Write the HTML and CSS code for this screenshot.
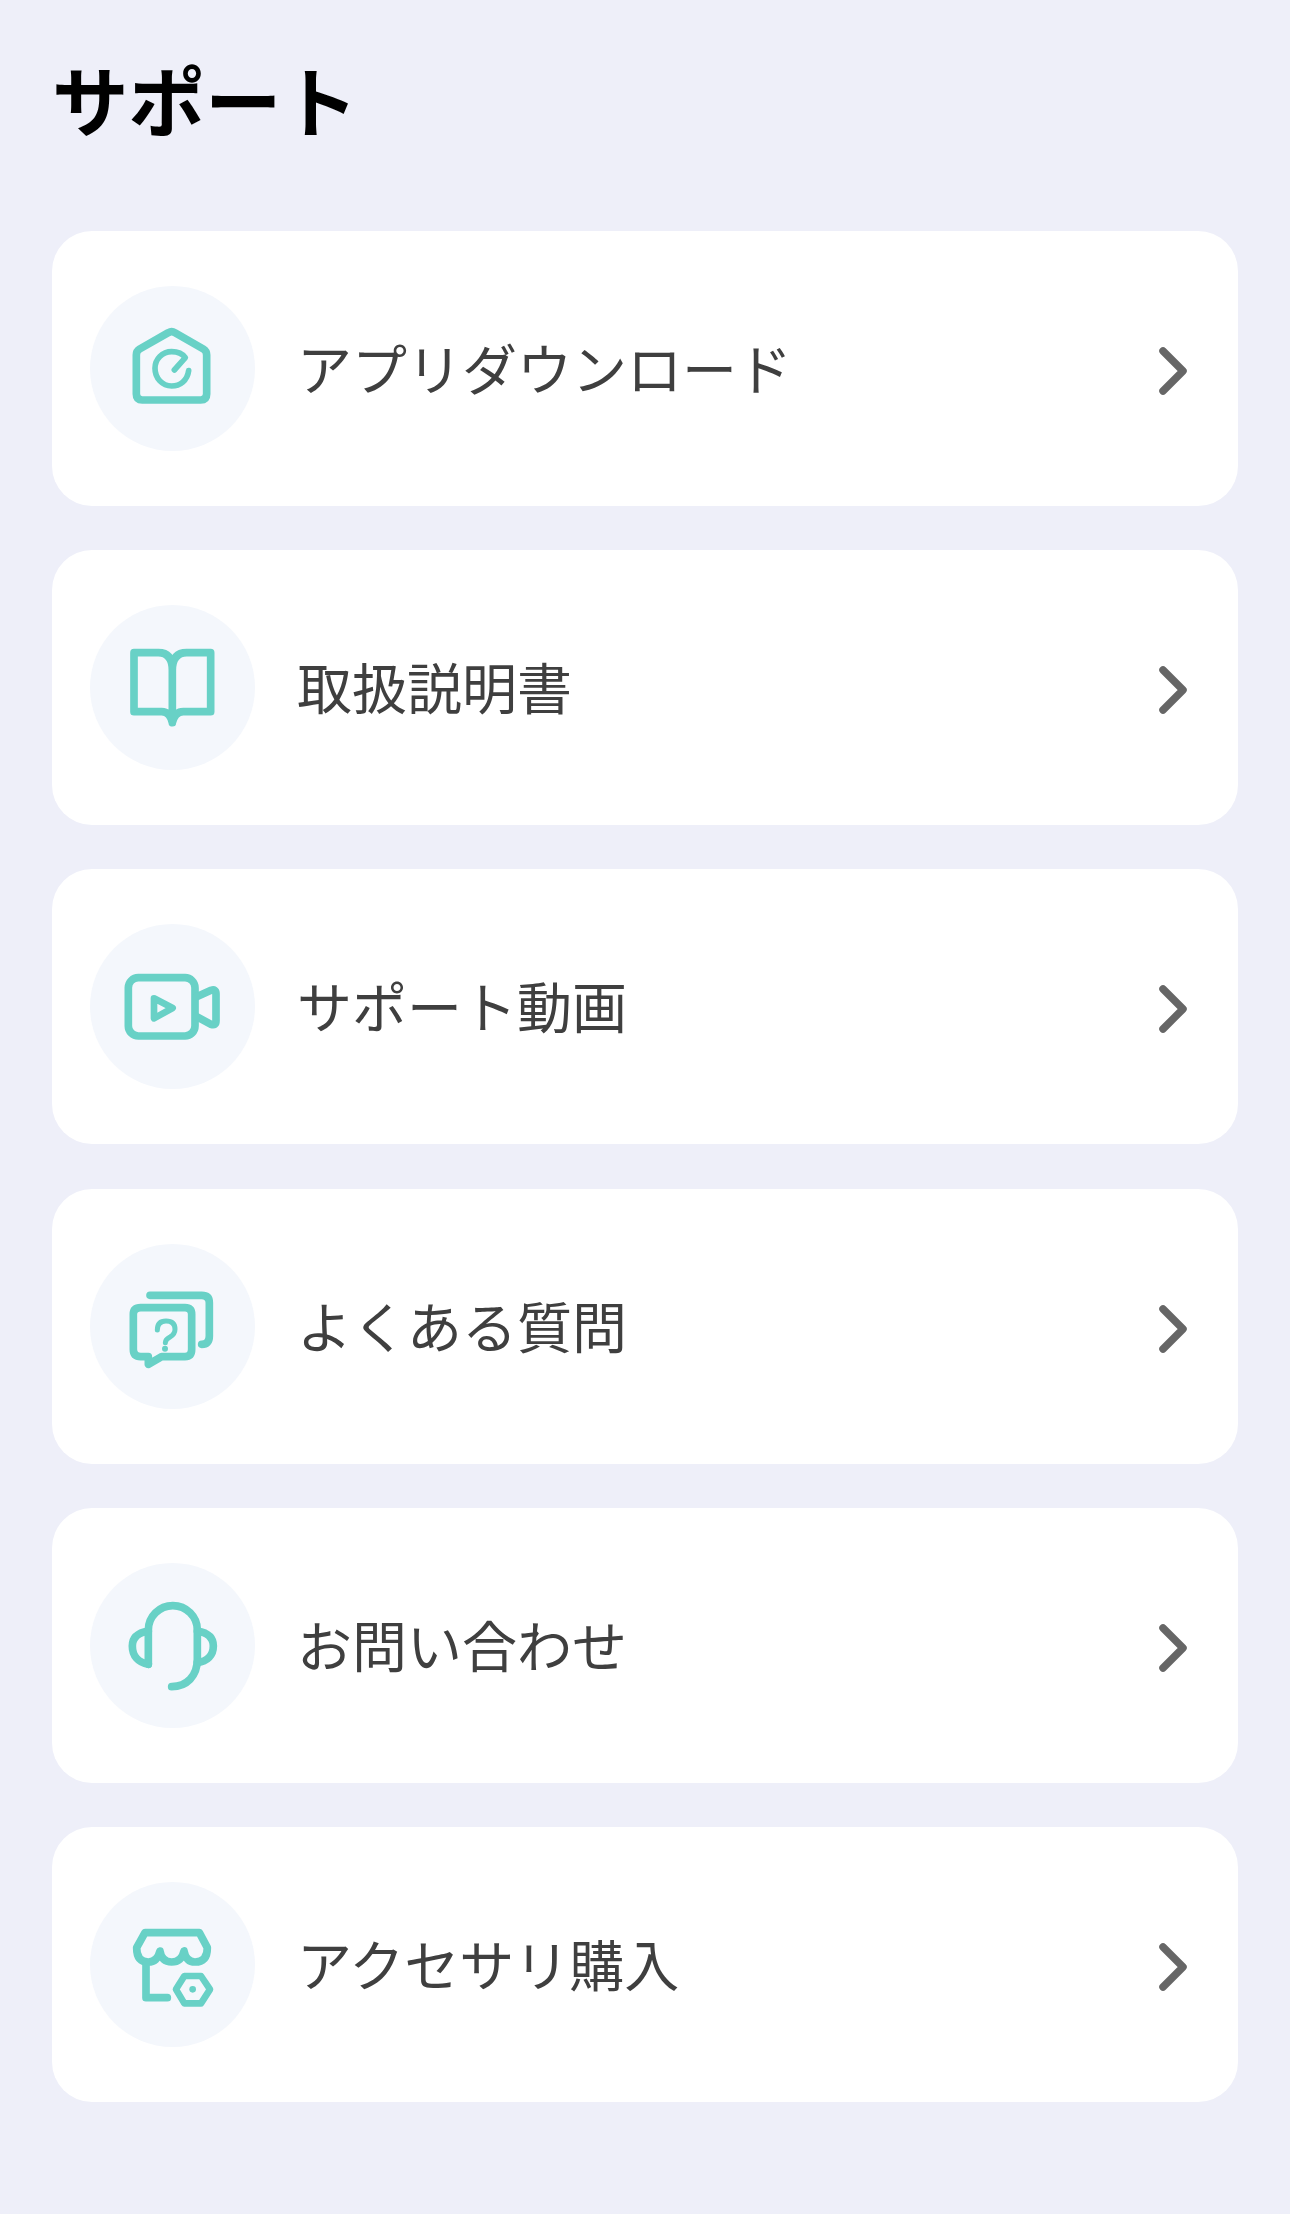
FILE: index.html
```html
<!DOCTYPE html>
<html lang="ja">
<head>
<meta charset="utf-8">
<title>サポート</title>
<link rel="stylesheet" href="styles.css">
</head>
<body>
<main class="page">
  <h1 class="title">サポート</h1>
  <ul class="list">
    <li class="card">
      <div class="badge">
        <svg class="icon" viewBox="30 18 495 495"><path class="s23" d="M265 158 Q275 152 285 158 L370 207 Q380 213 380 225 V342 Q380 360 362 360 H187 Q169 360 169 342 V225 Q169 213 179 207 Z"/><path class="s17" d="M326 272 C322 302 300 318 275 318 C247 318 225 295 225 265 C225 237 247 215 275 215 C293 215 308 222 316 233 L283 270"/></svg>
      </div>
      <span class="label">アプリダウンロード</span>
      <svg class="chevron" viewBox="0 0 30 50"><path d="M5 5 L25 25 L5 45"/></svg>
    </li>
    <li class="card">
      <div class="badge">
        <svg class="icon" viewBox="30 15 495 495"><path class="s23" d="M277 210 Q277 158 235 158 H162 V335 H245 Q270 335 277 368 Q285 335 310 335 H392 V158 H320 Q277 158 277 210 V368"/></svg>
      </div>
      <span class="label">取扱説明書</span>
      <svg class="chevron" viewBox="0 0 30 50"><path d="M5 5 L25 25 L5 45"/></svg>
    </li>
    <li class="card">
      <div class="badge">
        <svg class="icon" viewBox="30 27 495 495"><rect class="s23" x="145" y="188" width="200" height="175" rx="30"/><path class="s23" d="M350 245 L393 226 Q408 221 408 236 V318 Q408 333 393 328 L350 305"/><path class="s20" d="M222 250 L278 279 L222 310 Z"/></svg>
      </div>
      <span class="label">サポート動画</span>
      <svg class="chevron" viewBox="0 0 30 50"><path d="M5 5 L25 25 L5 45"/></svg>
    </li>
    <li class="card">
      <div class="badge">
        <svg class="icon" viewBox="30 24 495 495"><path class="s23" d="M210 178 H365 Q388 178 388 200 V300 Q388 325 365 325"/><path class="s23" d="M182 215 H315 Q335 215 335 235 V340 Q335 362 315 362 H245 L205 385 V362 H182 Q160 362 160 340 V235 Q160 215 182 215 Z"/><path class="s15" d="M232 282 Q232 255 258 255 Q285 255 285 280 Q285 295 270 303 Q256 310 256 320"/><circle class="dot" cx="255" cy="338" r="9"/></svg>
      </div>
      <span class="label">よくある質問</span>
      <svg class="chevron" viewBox="0 0 30 50"><path d="M5 5 L25 25 L5 45"/></svg>
    </li>
    <li class="card">
      <div class="badge">
        <svg class="icon" viewBox="30 21 495 495"><path class="s23" d="M205 325 V222 A73.5 73 0 0 1 352 222 V310 C352 360 320 392 275 392"/><path class="s23" d="M205 225 C175 230 157 245 157 270 C157 300 175 320 205 325"/><path class="s23" d="M352 225 C382 230 400 245 400 270 C400 298 382 316 352 320"/></svg>
      </div>
      <span class="label">お問い合わせ</span>
      <svg class="chevron" viewBox="0 0 30 50"><path d="M5 5 L25 25 L5 45"/></svg>
    </li>
    <li class="card">
      <div class="badge">
        <svg class="icon" viewBox="30 18 495 495"><path class="s23" d="M195 170 H358 L382 215 Q382 258 345 258 Q318 258 312 225 Q305 258 275 258 Q245 258 240 225 Q232 258 205 258 Q170 258 170 215 Z"/><path class="s23" d="M198 262 V365 H262"/><path class="s20" d="M288 340 L313 300 H363 L390 340 L363 382 H313 Z"/><circle class="dot" cx="338" cy="340" r="10"/></svg>
      </div>
      <span class="label">アクセサリ購入</span>
      <svg class="chevron" viewBox="0 0 30 50"><path d="M5 5 L25 25 L5 45"/></svg>
    </li>
  </ul>
</main>
</body>
</html>
```
FILE: styles.css
```css
* { box-sizing: border-box; }
html, body { margin: 0; padding: 0; }
body {
  background: #eeeff9;
  font-family: "Noto Sans CJK JP", "Noto Sans", sans-serif;
  height: 2214px;
  overflow: hidden;
}
.page { padding: 42px 52px 0; }
.title {
  margin: 0 0 77px;
  font-size: 76.5px;
  line-height: 112px;
  font-weight: 700;
  color: #000;
}
.list {
  list-style: none;
  margin: 0;
  padding: 0;
  display: flex;
  flex-direction: column;
  gap: 44.2px;
}
.card {
  height: 275px;
  background: #fff;
  border-radius: 40px;
  display: flex;
  align-items: center;
  padding: 0 50px 0 38px;
}
.badge {
  width: 165px;
  height: 165px;
  border-radius: 50%;
  background: #f4f7fc;
  flex: none;
  margin-right: 42px;
}
.icon { display: block; width: 165px; height: 165px; }
.icon path, .icon rect {
  fill: none;
  stroke: #68d1c6;
  stroke-linecap: round;
  stroke-linejoin: round;
}
.s15 { stroke-width: 15; }
.s17 { stroke-width: 17; }
.s20 { stroke-width: 20; }
.s23 { stroke-width: 23; }
.dot { fill: #68d1c6; }
.label {
  flex: 1;
  font-size: 55px;
  line-height: 80px;
  color: #3f3f3f;
  font-weight: 400;
  margin-top: -5px;
}
.chevron { width: 30px; height: 50px; flex: none; margin-top: 5px; }
.chevron path {
  fill: none;
  stroke: #666;
  stroke-width: 7.5;
  stroke-linecap: round;
  stroke-linejoin: round;
}
```
